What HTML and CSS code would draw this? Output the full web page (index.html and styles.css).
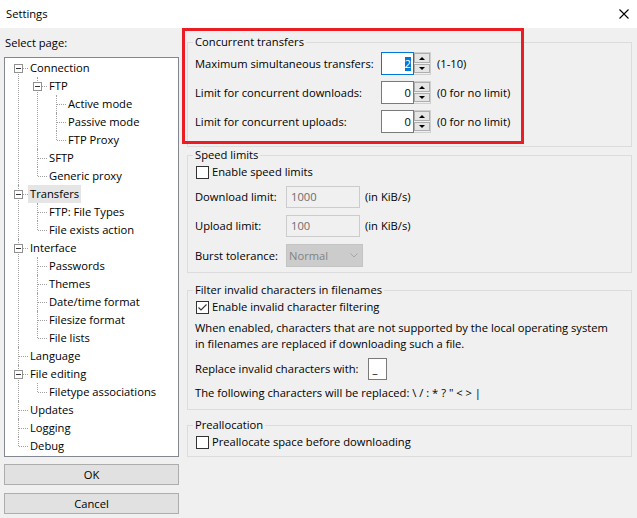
FILE: index.html
```html
<!DOCTYPE html>
<html>
<head>
<meta charset="utf-8">
<title>Settings</title>
<link rel="stylesheet" href="styles.css">
</head>
<body>
<div class="titlebar">
  <span class="title">Settings</span>
  <svg class="close" width="10" height="10" viewBox="0 0 10 10"><path d="M0.5 0.5 L9.5 9.5 M9.5 0.5 L0.5 9.5" stroke="#000" stroke-width="1.1" fill="none"/></svg>
</div>
<div class="main">
  <div class="left">
    <div class="sel-label">Select page:</div>
    <div class="treebox">
      <ul class="tree">
        <li><div class="row"><span class="exp"></span><span class="lbl">Connection</span></div>
          <ul>
            <li><div class="row"><span class="exp"></span><span class="lbl">FTP</span></div>
              <ul>
                <li><div class="row"><span class="lbl">Active mode</span></div></li>
                <li><div class="row"><span class="lbl">Passive mode</span></div></li>
                <li><div class="row"><span class="lbl">FTP Proxy</span></div></li>
              </ul>
            </li>
            <li><div class="row"><span class="lbl">SFTP</span></div></li>
            <li><div class="row"><span class="lbl">Generic proxy</span></div></li>
          </ul>
        </li>
        <li><div class="row"><span class="exp"></span><span class="lbl selected">Transfers</span></div>
          <ul>
            <li><div class="row"><span class="lbl">FTP: File Types</span></div></li>
            <li><div class="row"><span class="lbl">File exists action</span></div></li>
          </ul>
        </li>
        <li><div class="row"><span class="exp"></span><span class="lbl">Interface</span></div>
          <ul>
            <li><div class="row"><span class="lbl">Passwords</span></div></li>
            <li><div class="row"><span class="lbl">Themes</span></div></li>
            <li><div class="row"><span class="lbl">Date/time format</span></div></li>
            <li><div class="row"><span class="lbl">Filesize format</span></div></li>
            <li><div class="row"><span class="lbl">File lists</span></div></li>
          </ul>
        </li>
        <li><div class="row"><span class="lbl">Language</span></div></li>
        <li><div class="row"><span class="exp"></span><span class="lbl">File editing</span></div>
          <ul>
            <li><div class="row"><span class="lbl">Filetype associations</span></div></li>
          </ul>
        </li>
        <li><div class="row"><span class="lbl">Updates</span></div></li>
        <li><div class="row"><span class="lbl">Logging</span></div></li>
        <li><div class="row"><span class="lbl">Debug</span></div></li>
      </ul>
    </div>
    <button class="btn">OK</button>
    <button class="btn">Cancel</button>
  </div>

  <div class="right">
    <fieldset class="group g1">
      <legend>Concurrent transfers</legend>
      <div class="srow">
        <span class="lab">Maximum simultaneous transfers:</span>
        <span class="numbox focus"><span class="sel">2</span></span>
        <span class="spin"><span class="sbtn up"></span><span class="sbtn down"></span></span>
        <span class="note">(1-10)</span>
      </div>
      <div class="srow">
        <span class="lab">Limit for concurrent downloads:</span>
        <span class="numbox">0</span>
        <span class="spin"><span class="sbtn up"></span><span class="sbtn down"></span></span>
        <span class="note">(0 for no limit)</span>
      </div>
      <div class="srow">
        <span class="lab">Limit for concurrent uploads:</span>
        <span class="numbox">0</span>
        <span class="spin"><span class="sbtn up"></span><span class="sbtn down"></span></span>
        <span class="note">(0 for no limit)</span>
      </div>
    </fieldset>

    <fieldset class="group g2">
      <legend>Speed limits</legend>
      <div class="cbrow"><span class="cb"></span><span>Enable speed limits</span></div>
      <div class="frow first">
        <span class="lab2">Download limit:</span>
        <span class="dis">1000</span>
        <span class="unit">(in KiB/s)</span>
      </div>
      <div class="frow">
        <span class="lab2">Upload limit:</span>
        <span class="dis">100</span>
        <span class="unit">(in KiB/s)</span>
      </div>
      <div class="frow">
        <span class="lab2">Burst tolerance:</span>
        <span class="combo"><span>Normal</span><svg width="8" height="5" viewBox="0 0 8 5"><path d="M0.5 0.5 L4 4 L7.5 0.5" stroke="#a6a6a6" stroke-width="1" fill="none"/></svg></span>
      </div>
    </fieldset>

    <fieldset class="group g3">
      <legend>Filter invalid characters in filenames</legend>
      <div class="cbrow"><span class="cb"><svg width="11" height="11" viewBox="0 0 11 11"><path d="M1.5 5.5 L4 8 L9.5 2.5" stroke="#333" stroke-width="1.1" fill="none"/></svg></span><span>Enable invalid character filtering</span></div>
      <p class="desc">When enabled, characters that are not supported by the local operating system<br>in filenames are replaced if downloading such a file.</p>
      <div class="rrow">
        <span>Replace invalid characters with:</span>
        <span class="rbox">_</span>
      </div>
      <div class="following">The following characters will be replaced: \ / : * ? " &lt; &gt; |</div>
    </fieldset>

    <fieldset class="group g4">
      <legend>Preallocation</legend>
      <div class="cbrow"><span class="cb"></span><span>Preallocate space before downloading</span></div>
    </fieldset>
  </div>
</div>
<div class="highlight"></div>
</body>
</html>
```

FILE: styles.css
```css
* { box-sizing: border-box; }
html, body { margin: 0; padding: 0; }
body {
  width: 637px;
  height: 518px;
  background: #f0f0f0;
  font-family: "Open Sans", "Noto Sans", sans-serif;
  font-size: 11.2px;
  line-height: 16px;
  color: #000;
  position: relative;
  overflow: hidden;
}

.titlebar {
  height: 28px;
  background: #fff;
  display: flex;
  align-items: center;
  justify-content: space-between;
  padding: 0 8px 0 6px;
}
.close { display: block; }

.main {
  display: flex;
  align-items: flex-start;
}

/* left column */
.left {
  width: 175px;
  margin-left: 4px;
  margin-top: 7px;
  display: flex;
  flex-direction: column;
}
.sel-label { padding-left: 1px; height: 16px; }
.treebox {
  margin-top: 6px;
  height: 400px;
  border: 1px solid #828790;
  background: #fff;
  padding-top: 1px;
  overflow: hidden;
}
.tree, .tree ul { list-style: none; margin: 0; padding: 0; }
.tree ul { padding-left: 19px; }
.tree li { position: relative; }
.tree li::before {
  content: "";
  position: absolute;
  left: 13px;
  top: 0;
  bottom: 0;
  border-left: 1px dotted #a0a0a0;
}
.tree li:last-child::before { bottom: auto; height: 9px; }
.tree > li:first-child::before { top: 9px; }
.tree li::after {
  content: "";
  position: absolute;
  left: 14px;
  top: 9px;
  width: 9px;
  border-top: 1px dotted #a0a0a0;
}
.row {
  position: relative;
  height: 18px;
  line-height: 18px;
  padding-left: 23px;
  white-space: nowrap;
  z-index: 1;
}
.lbl { display: inline-block; padding: 0 2px; height: 18px; }
.lbl.selected { background: #e5e5e5; }
.exp {
  position: absolute;
  left: 9px;
  top: 5px;
  width: 9px;
  height: 9px;
  border: 1px solid #919191;
  background: #fff;
}
.exp::after {
  content: "";
  position: absolute;
  left: 1px;
  top: 3px;
  width: 5px;
  height: 1px;
  background: #333;
}

.btn {
  margin-top: 7px;
  height: 21px;
  border: 1px solid #adadad;
  background: #e1e1e1;
  font: inherit;
  line-height: 19px;
  padding: 0;
  color: #000;
}
.btn + .btn { margin-top: 8px; }

/* right column */
.right {
  width: 445px;
  margin-left: 8px;
  margin-top: 6px;
}
.group {
  margin: 0;
  border: 1px solid #dcdcdc;
  padding: 0 7px;
  min-inline-size: 0;
}
.group legend {
  padding: 0 2px;
  margin-left: -2px;
  line-height: 16px;
}
.g1 { padding-top: 2px; padding-bottom: 13px; }
.g2 { padding-top: 1px; padding-bottom: 5px; }
.g3 { margin-top: 9px; padding-top: 1px; padding-bottom: 8px; }
.g4 { margin-top: 7px; padding-top: 1px; padding-bottom: 6px; }

.srow { display: flex; align-items: center; height: 23px; }
.srow + .srow { margin-top: 6px; }
.lab { width: 186px; }
.numbox {
  width: 33px;
  height: 23px;
  border: 1px solid #7a7a7a;
  background: #fff;
  text-align: right;
  padding-right: 2px;
  line-height: 21px;
}
.numbox.focus { border-color: #0078d7; }
.sel {
  display: inline-block;
  background: #0078d7;
  color: #fff;
  line-height: 14px;
  vertical-align: middle;
  margin-top: -2px;
}
.spin {
  width: 17px;
  height: 23px;
  border: 1px solid #cfcfcf;
  border-left: 0;
  background: #f0f0f0;
  display: flex;
  flex-direction: column;
  gap: 1px;
}
.sbtn {
  border: 1px solid #adadad;
  background: #e5e5e5;
  display: flex;
  align-items: center;
  justify-content: center;
}
.sbtn.up { height: 10px; }
.sbtn.down { height: 9px; }
.sbtn.up::before {
  content: "";
  border-left: 3px solid transparent;
  border-right: 3px solid transparent;
  border-bottom: 3px solid #000;
}
.sbtn.down::before {
  content: "";
  border-left: 3px solid transparent;
  border-right: 3px solid transparent;
  border-top: 3px solid #000;
}
.note { margin-left: 6px; }

.cbrow { display: flex; align-items: center; height: 16px; white-space: nowrap; }
.cb {
  width: 13px;
  height: 13px;
  border: 1px solid #333;
  background: #fff;
  margin-left: 1px;
  margin-right: 3px;
  display: flex;
}
.cb svg { display: block; }

.frow { display: flex; align-items: center; margin-top: 7px; }
.frow.first { margin-top: 6px; }
.lab2 { width: 91px; }
.dis {
  width: 74px;
  height: 22px;
  border: 1px solid #cccccc;
  background: #f0f0f0;
  color: #6d6d6d;
  padding-left: 4px;
  line-height: 20px;
}
.unit { margin-left: 5px; }
.combo {
  width: 77px;
  height: 23px;
  background: #cccccc;
  border: 1px solid #c4c4c4;
  color: #838383;
  display: flex;
  align-items: center;
  justify-content: space-between;
  padding: 0 4px 0 2px;
}

.desc { margin: 5px 0 0; white-space: nowrap; }
.rrow { display: flex; align-items: center; height: 22px; margin-top: 6px; }
.rbox {
  width: 19px;
  height: 22px;
  border: 1px solid #7a7a7a;
  background: #fff;
  margin-left: 10px;
  padding-left: 3px;
  line-height: 20px;
}
.following { margin-top: 5px; }

.highlight {
  position: absolute;
  left: 182px;
  top: 28px;
  width: 342px;
  height: 116px;
  border: 3px solid #ec1c24;
}
```
